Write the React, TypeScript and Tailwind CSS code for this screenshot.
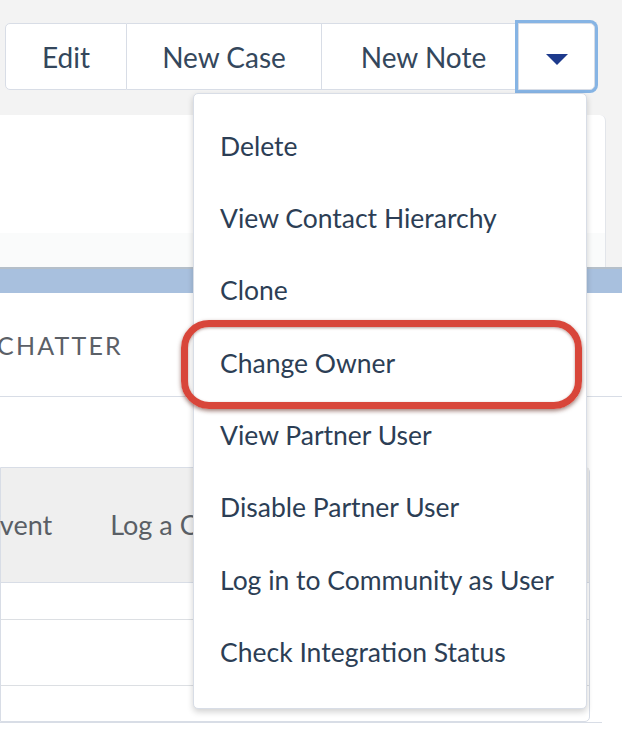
import React from "react";

const items = [
  "Delete",
  "View Contact Hierarchy",
  "Clone",
  "Change Owner",
  "View Partner User",
  "Disable Partner User",
  "Log in to Community as User",
  "Check Integration Status",
];

export default function App() {
  return (
    <div
      className="relative w-[622px] h-[739px] overflow-hidden bg-[#f3f3f3] text-[#2c3e55]"
      style={{ fontFamily: "Lato, 'Open Sans', sans-serif" }}
    >
      {/* header with button group */}
      <div className="h-[115px] pt-[23px] pl-[5px]">
        <div className="flex h-[67px] w-[590px]">
          <div className="flex w-[122px] items-center justify-center rounded-l-[5px] border border-[#d8dde6] bg-white text-[28px] text-[#34475c]">
            Edit
          </div>
          <div className="flex w-[195px] items-center justify-center border-y border-r border-[#d8dde6] bg-white text-[28px] text-[#34475c]">
            New Case
          </div>
          <div className="flex w-[196px] items-center justify-center border-y border-r border-[#d8dde6] bg-white text-[28px] text-[#34475c]">
            <span className="ml-[8px]">New Note</span>
          </div>
          <div className="flex w-[77px] items-center justify-center rounded-r-[5px] border border-[#d8dde6] bg-white shadow-[0_0_0_3px_#86b4e4]">
            <svg width="24" height="14" viewBox="0 0 24 14" className="mt-[5px]">
              <path d="M1 2 L23 2 L12 13 Z" fill="#1d3a8c" />
            </svg>
          </div>
        </div>
      </div>

      {/* first card */}
      <div className="flex">
        <div className="h-[152px] w-[606px] rounded-tr-[6px] border-r border-[#e2e5ea] bg-white">
          <div className="h-[118px]" />
          <div className="h-[34px] bg-[#fafbfb]" />
        </div>
      </div>

      {/* blue page band */}
      <div className="h-[26px] border-t-2 border-[#b5bfc9] bg-[#a8c0de]" />

      {/* second card */}
      <div className="h-[446px] bg-white">
        <div className="flex h-[104px] items-center border-b border-[#d8dde6]">
          <span className="-ml-[3px] mt-[3px] text-[25px] tracking-[2.2px] text-[#5b6067]">
            CHATTER
          </span>
        </div>
        <div className="h-[70px]" />
        <div className="w-[590px] rounded-r-[5px] border border-[#d8dde6]">
          <div className="flex h-[115px] items-center gap-[58px] border-b border-[#d8dde6] bg-[#efefef] text-[27px] text-[#5a5f66]">
            <span className="-ml-[78px] whitespace-nowrap">New Event</span>
            <span className="whitespace-nowrap">Log a Call</span>
          </div>
          <div className="h-[36px]" />
          <div className="h-[67px] border-y border-[#dcdfe3]" />
          <div className="h-[35px]" />
        </div>
        <div className="h-[1px] w-[602px] bg-[#d8dde6]" />
      </div>

      {/* dropdown menu */}
      <div className="absolute left-[193px] top-[93px] w-[394px] rounded-[5px] border border-[#d8dde6] bg-white pt-[16px] pb-[20px] shadow-[0_3px_6px_rgba(0,0,0,0.18)]">
        {items.map((t) => (
          <div key={t} className="flex h-[72.3px] items-center whitespace-nowrap pl-[26px] text-[26.5px] leading-none text-[#2c3e55]">
            {t}
          </div>
        ))}
      </div>

      {/* red annotation ring */}
      <div className="absolute left-[181px] top-[320px] h-[89px] w-[401px] rounded-[28px] border-[7px] border-[#d8463a] shadow-[0_2px_4px_rgba(80,20,10,0.55),inset_0_1px_3px_rgba(80,20,10,0.4)]" />
    </div>
  );
}
